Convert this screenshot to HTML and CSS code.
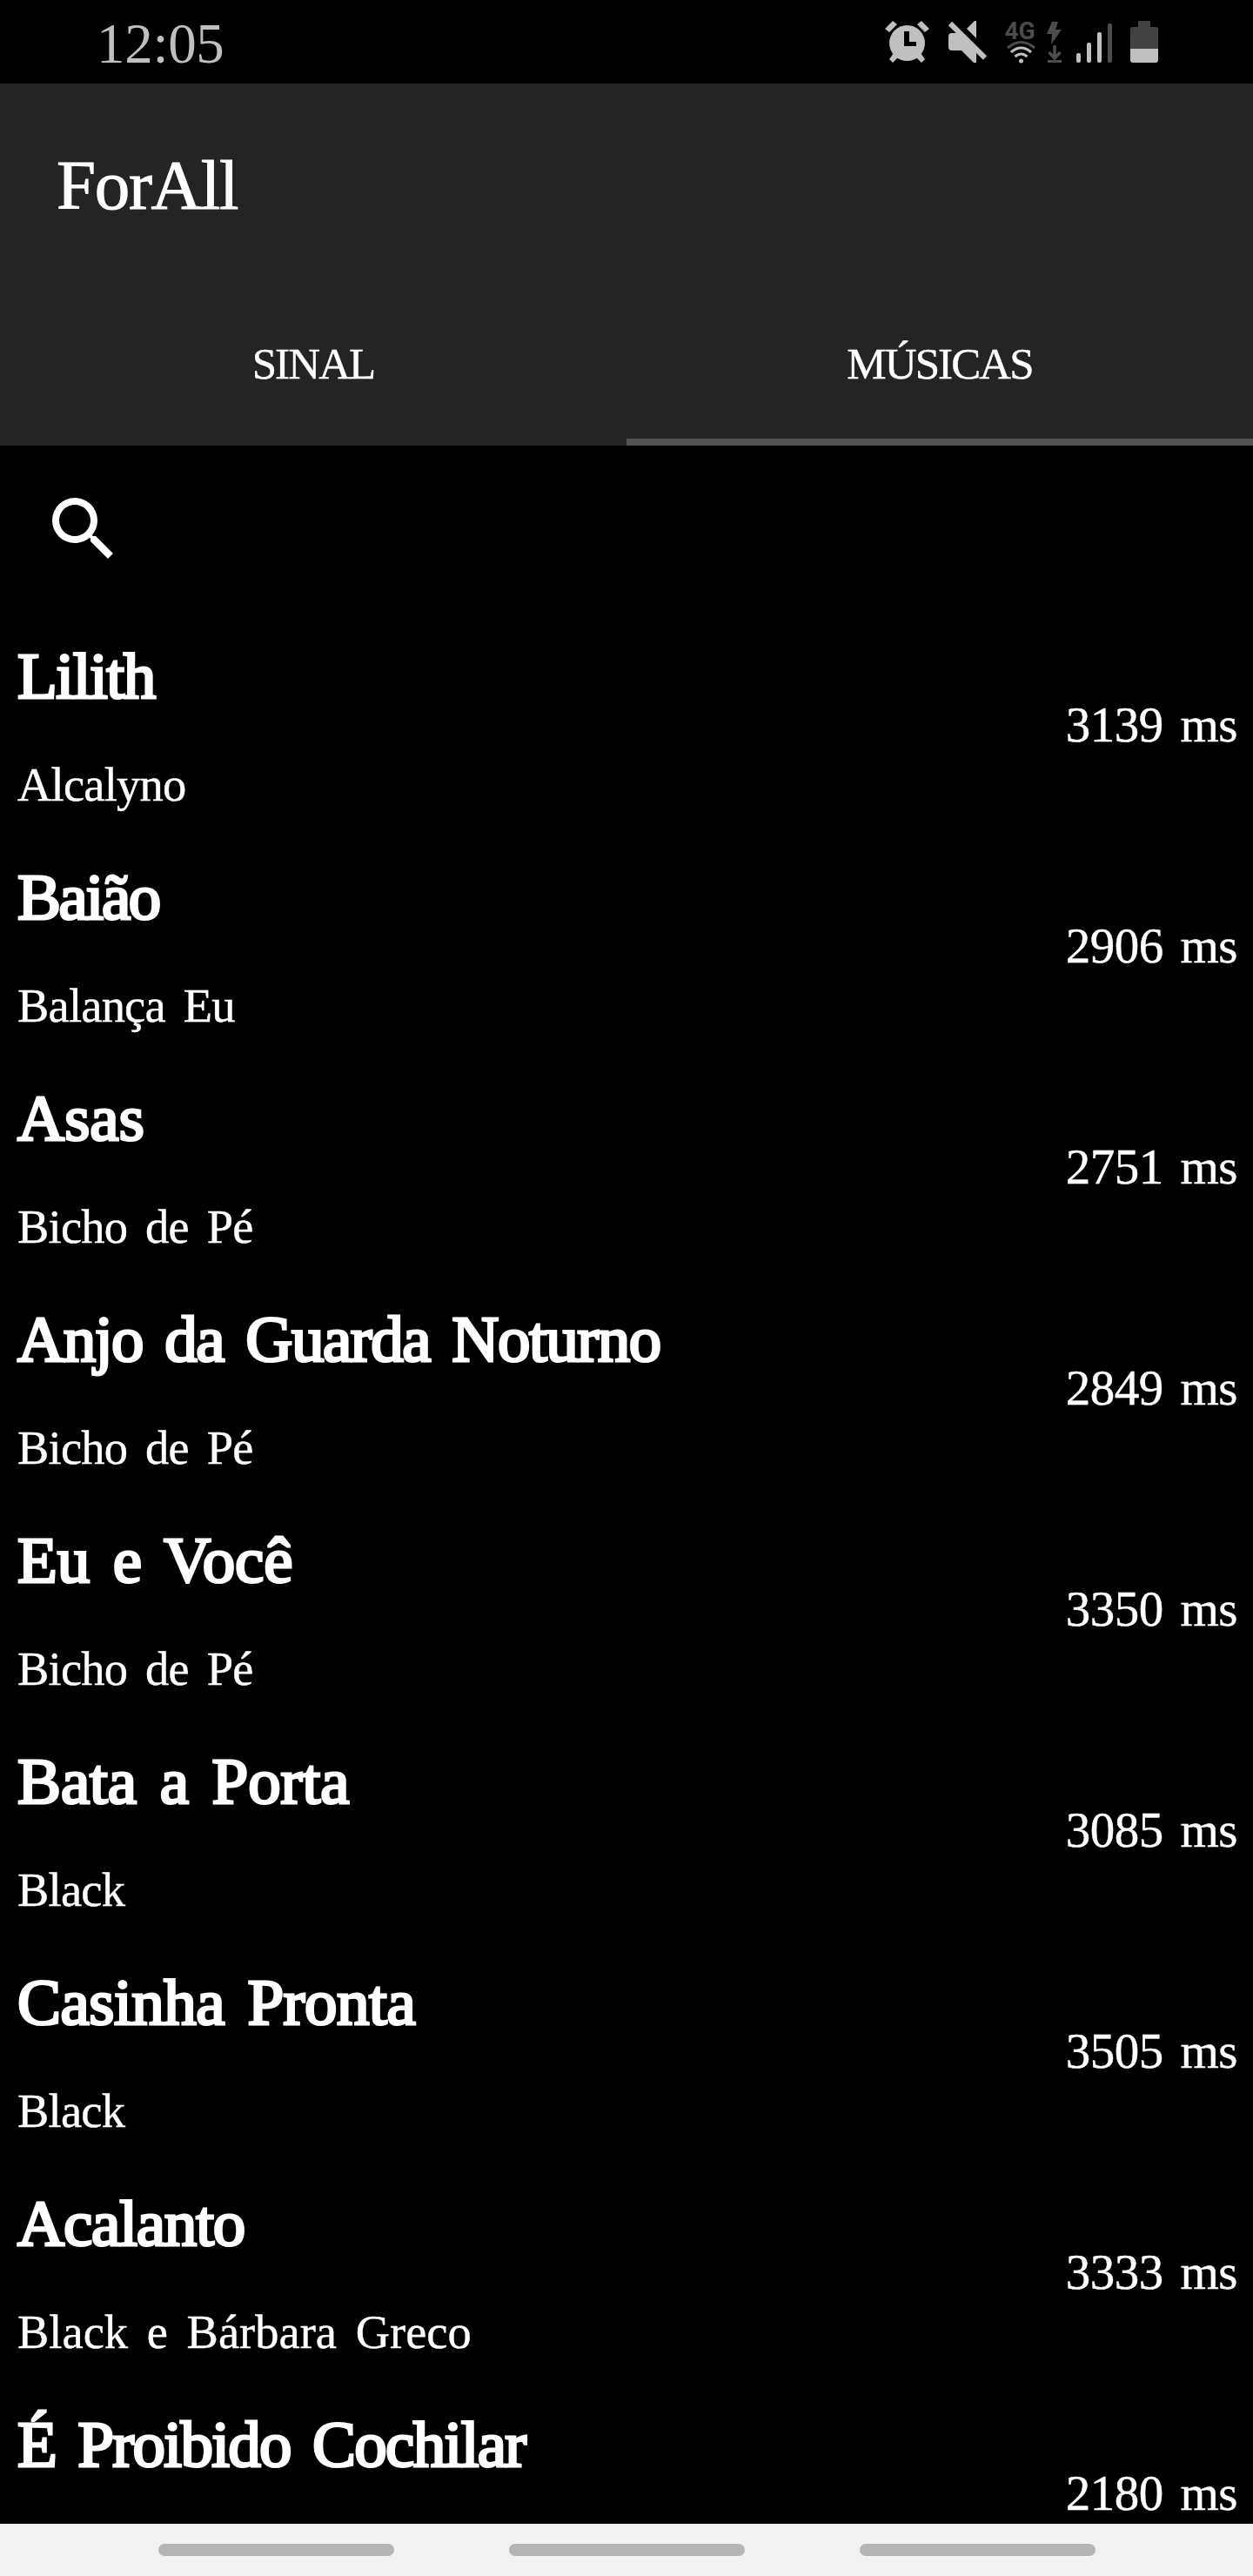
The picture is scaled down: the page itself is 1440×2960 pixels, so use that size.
FILE: index.html
```html
<!DOCTYPE html>
<html lang="pt-BR">
<head>
<meta charset="utf-8">
<title>ForAll</title>
<link rel="stylesheet" href="styles.css">
</head>
<body>
<div class="status">
  <span class="clock">12:05</span>
  <svg class="status-icons" viewBox="1000 0 360 96" width="360" height="96">
    <g fill="#bfbfbf" stroke="none">
      <circle cx="1042.500" cy="49.500" r="20.500"/>
      <path d="M1039 36h6v12h8v5h-14z" fill="#000"/>
      <path d="M1017 33l9-9 5 4-9 9zM1068 33l-9-9-5 4 9 9z"/>
      <path d="M1022 68l5-7 5 5-6 6zM1063 68l-5-7-5 5 6 6z"/>
      <path d="M1090 42q0-4 4-4h7l21 21v13h-3l-14-14h-11q-4 0-4-4z"/>
      <path d="M1122 24v20l-11-11 9-9z"/>
      <path d="M1092 27l40 39.500" stroke="#bfbfbf" stroke-width="6"/>
      <circle cx="1173.500" cy="70" r="2.500"/>
      <rect x="1237" y="61" width="5" height="11" rx="2"/>
      <rect x="1249" y="49" width="5" height="23" rx="2"/>
      <rect x="1261" y="37" width="5" height="35" rx="2"/>
    </g>
    <text x="1154.500" y="45" class="net">4G</text>
    <g fill="none" stroke="#bfbfbf" stroke-width="3">
      <path d="M1166.500 65q7-6 14 0M1162 60q11.500-10 23 0"/>
      <path d="M1158 55q15.500-13 31 0" stroke="#4c4c4c"/>
    </g>
    <g fill="#4c4c4c">
      <path d="M1209 25h7l-3 9h7l-12 17 1-12h-6z"/>
      <rect x="1204" y="69" width="16" height="3"/>
      <rect x="1273" y="27" width="5" height="45" rx="2"/>
      <path d="M1308 24h14v7h6q3 0 3 3v22h-32v-22q0-3 3-3h6z" fill="#424242"/>
    </g>
    <path d="M1212 52v16M1205.500 60l6.500 7 6.500-7" fill="none" stroke="#4c4c4c" stroke-width="3.500"/>
    <path d="M1299 56h32v13q0 3-3 3h-26q-3 0-3-3z" fill="#bfbfbf"/>
  </svg>
</div>
<header class="app-bar">
  <h1>ForAll</h1>
  <nav class="tabs"><a class="tab">SINAL</a><a class="tab active">MÚSICAS</a></nav>
</header>
<div class="search">
  <svg viewBox="3 3 17.500 17.500" width="70" height="70"><path fill="#fff" d="M15.500 14h-.79l-.28-.27A6.470 6.470 0 0 0 16 9.500 6.500 6.500 0 1 0 9.500 16c1.610 0 3.090-.59 4.230-1.570l.27.28v.79l5 4.990L20.490 19l-4.990-5zm-6 0C7.010 14 5 11.990 5 9.500S7.010 5 9.500 5 14 7.010 14 9.500 11.990 14 9.500 14z"/></svg>
</div>
<main class="songs">
  <div class="song"><div><h2>Lilith</h2><p>Alcalyno</p></div><span>3139 ms</span></div>
  <div class="song"><div><h2>Baião</h2><p>Balança Eu</p></div><span>2906 ms</span></div>
  <div class="song"><div><h2>Asas</h2><p>Bicho de Pé</p></div><span>2751 ms</span></div>
  <div class="song"><div><h2>Anjo da Guarda Noturno</h2><p>Bicho de Pé</p></div><span>2849 ms</span></div>
  <div class="song"><div><h2>Eu e Você</h2><p>Bicho de Pé</p></div><span>3350 ms</span></div>
  <div class="song"><div><h2>Bata a Porta</h2><p>Black</p></div><span>3085 ms</span></div>
  <div class="song"><div><h2>Casinha Pronta</h2><p>Black</p></div><span>3505 ms</span></div>
  <div class="song"><div><h2>Acalanto</h2><p>Black e Bárbara Greco</p></div><span>3333 ms</span></div>
  <div class="song"><div><h2>É Proibido Cochilar</h2></div><span>2180 ms</span></div>
</main>
<footer class="nav-bar"><i></i><i></i><i></i></footer>
</body>
</html>
```

FILE: styles.css
```css
* { box-sizing: border-box; margin: 0; padding: 0; }
body {
  display: flex;
  flex-direction: column;
  width: 1440px;
  height: 2960px;
  overflow: hidden;
  background: #000;
  color: #fff;
  font-family: "Liberation Serif", "Times New Roman", serif;
}
.status { display: flex; justify-content: space-between; flex: none; height: 96px; padding: 0 80px 0 111px; }
.clock { font-size: 65px; line-height: 100px; letter-spacing: -0.300px; color: #bfbfbf; }
.net { font: bold 28px Roboto, sans-serif; fill: #4c4c4c; }
.app-bar { flex: none; height: 416px; background: #242424; }
h1 { height: 224px; padding: 70px 0 0 65px; font-size: 81px; line-height: 94px; font-weight: 400; letter-spacing: -1.300px; -webkit-text-stroke: 1px #fff; }
.tabs { display: flex; height: 192px; }
.tab { flex: 1; padding-bottom: 8px; border-bottom: 8px solid transparent; text-align: center; font-size: 51px; line-height: 196px; letter-spacing: -1.900px; -webkit-text-stroke: 0.400px #fff; }
.tab.active { border-color: #555; }
.search { flex: none; height: 208px; padding: 60px 0 0 60px; }
.search svg { display: block; }
.songs { flex: 1; overflow: hidden; }
.song { display: flex; justify-content: space-between; height: 254px; padding: 0 18px 0 20px; }
h2 { padding-top: 14px; font-size: 75px; line-height: 86px; font-weight: 400; letter-spacing: -1.500px; word-spacing: 8px; -webkit-text-stroke: 3px #fff; white-space: nowrap; }
p { padding-top: 50px; font-size: 54.500px; line-height: 64px; letter-spacing: -0.800px; word-spacing: 8px; -webkit-text-stroke: 0.400px #fff; white-space: nowrap; }
.song span { padding-top: 80px; font-size: 57px; line-height: 66px; letter-spacing: -0.500px; word-spacing: 6px; -webkit-text-stroke: 0.400px #fff; white-space: nowrap; }

.song:nth-child(2) h2 { letter-spacing: -2.400px; }
.song:nth-child(3) h2 { letter-spacing: 0; }
.song:nth-child(5) h2, .song:nth-child(6) h2 { letter-spacing: -0.100px; }
.song:nth-child(7) h2 { letter-spacing: -0.500px; }
.song:nth-child(8) h2 { letter-spacing: -1.200px; }
.song:nth-child(8) p { letter-spacing: 0; }
.song:nth-child(9) h2 { letter-spacing: -1.700px; }

.nav-bar { display: flex; justify-content: center; align-items: center; gap: 132px; flex: none; height: 60px; background: #f1f1f1; }
.nav-bar i { width: 271px; height: 14px; border-radius: 7px; background: #b5b5b5; }
```
